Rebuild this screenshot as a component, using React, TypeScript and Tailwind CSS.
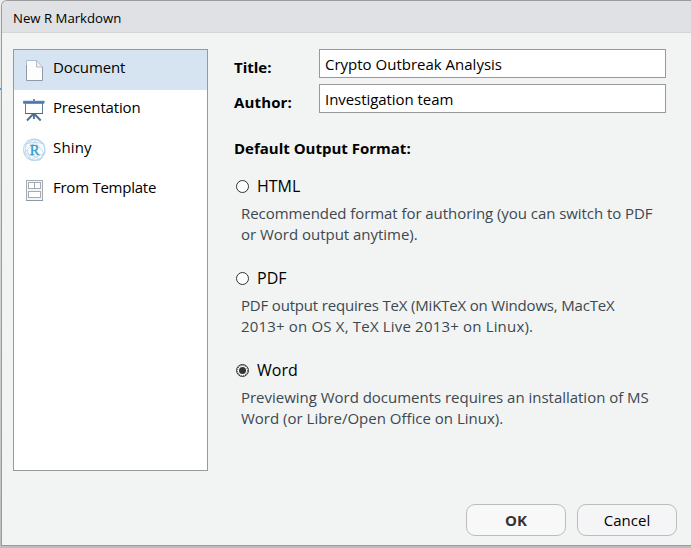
import React from "react";

function DocumentIcon() {
  return (
    <svg width="18" height="22" viewBox="0 0 18 22" fill="none">
      <path d="M.5.5h10.5l5.5 6v14H.5z" fill="#fdfdfe" />
      <path d="M.5 20V.5H11" stroke="#b4bdca" />
      <path d="M.5 5v15.5h16V7" stroke="#8e9bab" />
      <path d="M10.5.5v6.5h6z" fill="#eef1f4" stroke="#b3bdc9" />
    </svg>
  );
}

function PresentationIcon() {
  return (
    <svg width="22" height="23" viewBox="0 0 22 23" fill="none">
      <rect x="10" y="0" width="2" height="2" fill="#6e8fb4" />
      <rect x="2.5" y="4" width="17" height="10.5" fill="#fff" stroke="#5c7ea6" />
      <rect x="0" y="1.7" width="21.5" height="3" rx=".6" fill="#5f87b6" />
      <rect x="1" y="3" width="20" height="1" fill="#4673a8" />
      <path d="M2 14.5h18" stroke="#45698f" />
      <path d="M10.2 15 4 21.5M11.5 15l6.2 6.5M10.9 15v5" stroke="#4f6f96" strokeWidth="1.9" />
    </svg>
  );
}

function ShinyIcon() {
  return (
    <svg width="24" height="26" viewBox="0 0 24 26" fill="none">
      <circle cx="11.2" cy="12.8" r="10.7" fill="#f8fbfd" stroke="#bfd9ec" strokeWidth="1.1" />
      <path
        d="M12 2 3 7l-1 9 6 7 9 0 5-7-1-9zM3 7l9-2 9 2M12 5l-8 8 4 10M12 5l9 11-4 7M4 13l-2 3M8 23l5-3 9-4M2 16l11 4 4 3M12 2v3"
        stroke="#b5d5ea"
        strokeWidth=".8"
      />
      <text x="11.5" y="17.8" textAnchor="middle" fontSize="14.5" fill="#3396cb" stroke="#3396cb" strokeWidth=".35" fontFamily="'Liberation Serif', serif">
        R
      </text>
    </svg>
  );
}

function TemplateIcon() {
  return (
    <svg width="18" height="22" viewBox="0 0 18 22" fill="none">
      <rect x=".5" y=".5" width="16" height="20" fill="#f4f5f6" stroke="#a5abb5" />
      <path d="M0 20.5h17" stroke="#8f99a6" />
      <rect x="2.5" y="2.5" width="12" height="6" fill="#fff" stroke="#a5abb5" />
      <path d="M8.5 3v6" stroke="#9fa6b1" />
      <rect x="2.5" y="11.5" width="12" height="6" fill="#fff" stroke="#a5abb5" />
    </svg>
  );
}

const items = [
  { label: "Document", icon: <DocumentIcon />, row: "bg-[#d6e4f1]", iconBox: "pt-2.5 pl-[3px]", track: "tracking-[-0.1px]" },
  { label: "Presentation", icon: <PresentationIcon />, row: "", iconBox: "pt-[9px]", track: "tracking-[-0.16px]" },
  { label: "Shiny", icon: <ShinyIcon />, row: "", iconBox: "pt-[7px]", track: "tracking-[0.15px]" },
  { label: "From Template", icon: <TemplateIcon />, row: "", iconBox: "pt-2.5 pl-[3px]", track: "tracking-[-0.25px]" },
];

const formats = [
  {
    label: "HTML",
    lines: ["Recommended format for authoring (you can switch to PDF", "or Word output anytime)."],
    tracks: ["tracking-[-0.06px]", "tracking-[-0.02px]"],
  },
  {
    label: "PDF",
    lines: ["PDF output requires TeX (MiKTeX on Windows, MacTeX", "2013+ on OS X, TeX Live 2013+ on Linux)."],
    tracks: ["tracking-[-0.18px]", "tracking-[0.18px]"],
  },
  {
    label: "Word",
    lines: ["Previewing Word documents requires an installation of MS", "Word (or Libre/Open Office on Linux)."],
    tracks: ["tracking-[-0.02px]", "tracking-normal"],
  },
];

function Radio({ checked }: { checked: boolean }) {
  return (
    <svg width="13" height="13" viewBox="0 0 13 13" fill="none">
      <circle cx="6.5" cy="6.5" r="6" fill="#fff" stroke="#333" />
      {checked && (
        <>
          <circle cx="6.5" cy="6.5" r="5" stroke="#333" strokeDasharray="1 1" />
          <circle cx="6.5" cy="6.5" r="3.5" fill="#333" />
        </>
      )}
    </svg>
  );
}

export default function App() {
  const [selected, setSelected] = React.useState("Word");
  return (
    <div className="relative flex h-[548px] w-[691px] flex-col overflow-hidden bg-gradient-to-b from-[#ececec] to-[#bdbdbd] pl-px font-['Open_Sans','Noto_Sans',sans-serif] text-[15px] text-black">
      <div className="absolute top-[88px] left-0 h-0.5 w-px bg-[#5b9bd5]" />
      <div className="flex h-[546px] flex-col rounded-tl-md border-t border-b border-l border-[#999c9c] bg-[#f2f4f4]">
        <header className="h-8 shrink-0 rounded-tl-[5px] border-b border-[#d4d6d9] bg-[#e0e1e5] pl-[11px] text-[13.2px] leading-[34px]">
          <span>New R Markdown</span>
        </header>
        <main className="flex pt-4 pl-[11px]">
          <ul className="h-[422px] w-[195px] shrink-0 border border-[#999] bg-white">
            {items.map((it) => (
              <li key={it.label} className={"flex h-10 pl-[9px] " + it.row}>
                <span className={"w-[30px] shrink-0 " + it.iconBox}>{it.icon}</span>
                <span className={"leading-[34px] whitespace-nowrap " + it.track}>{it.label}</span>
              </li>
            ))}
          </ul>
          <section className="ml-[26px] w-[432px]">
            <div className="grid grid-cols-[85px_347px] gap-y-1.5">
              <b className="h-[29px] leading-[37px]"><span>Title:</span></b>
              <div className="h-[29px] border border-[#999] bg-white pl-[5px] leading-[29px]">
                <span>Crypto Outbreak Analysis</span>
              </div>
              <b className="h-[29px] leading-[37px] tracking-[0.15px]"><span>Author:</span></b>
              <div className="h-[29px] border border-[#999] bg-white pl-[5px] leading-[29px] tracking-[-0.06px]">
                <span>Investigation team</span>
              </div>
            </div>
            <h2 className="mt-[25px] h-[20px] leading-[20px] font-bold"><span>Default Output Format:</span></h2>
            {formats.map((f) => (
              <div key={f.label} className="h-[92px] pt-[17px]">
                <div className="flex h-[22px] items-center gap-2 pl-0.5" onClick={() => setSelected(f.label)}>
                  <Radio checked={selected === f.label} />
                  <span className="text-[16px] leading-[22px]">{f.label}</span>
                </div>
                <div className="mt-1.5 pl-[7px] leading-[21px] whitespace-nowrap text-[#3c4850]">
                  <div><span className={f.tracks[0]}>{f.lines[0]}</span></div>
                  <div><span className={f.tracks[1]}>{f.lines[1]}</span></div>
                </div>
              </div>
            ))}
          </section>
        </main>
        <footer className="mt-auto mb-[9px] flex justify-end gap-[11px] pr-3.5">
          <button className="h-8 w-[100px] rounded-[9px] border border-[#bcbcbc] bg-[#f8f8f8] font-bold text-[#333]">OK</button>
          <button className="h-8 w-[100px] rounded-[9px] border border-[#bcbcbc] bg-[#f5f5f8]">Cancel</button>
        </footer>
      </div>
    </div>
  );
}
